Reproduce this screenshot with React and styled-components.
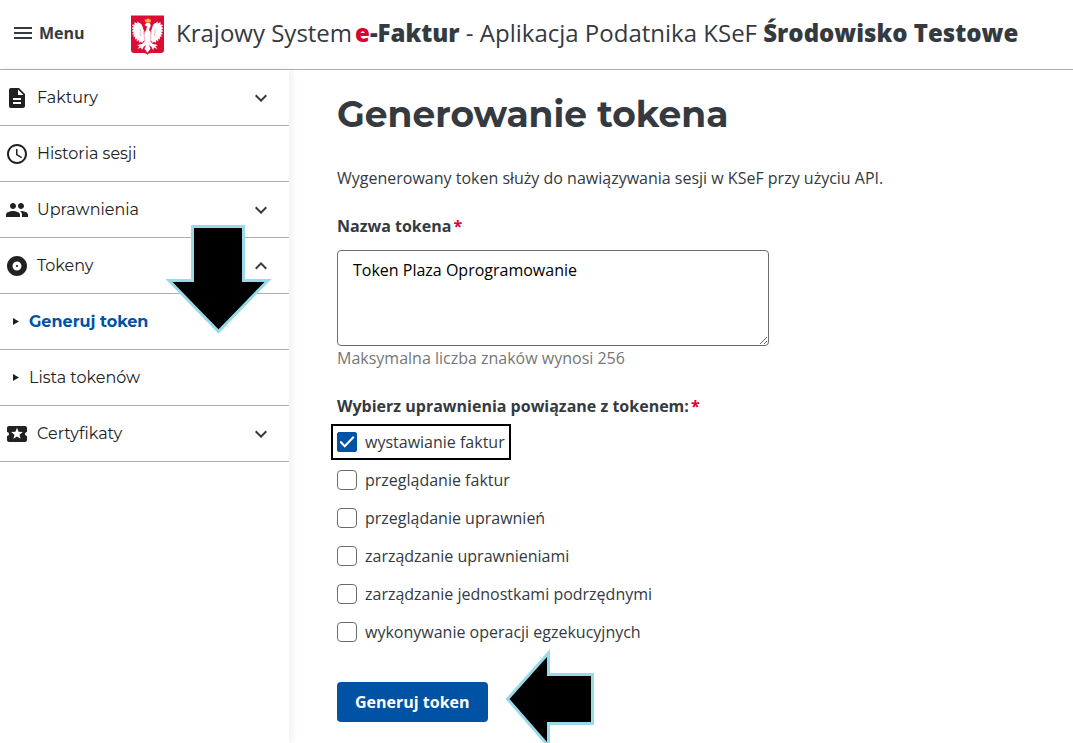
import React, { useState } from 'react';
import styled, { createGlobalStyle } from 'styled-components';
import {
  MdMenu,
  MdDescription,
  MdSchedule,
  MdPeople,
  MdAlbum,
  MdLocalActivity,
  MdExpandMore,
  MdExpandLess,
} from 'react-icons/md';

const GlobalStyle = createGlobalStyle`
  * {
    box-sizing: border-box;
  }

  body {
    margin: 0;
    background: #fff;
    color: #343a40;
    font-family: 'Open Sans', sans-serif;
    font-size: 16px;
    line-height: 24px;
  }
`;

const Page = styled.div`
  display: flex;
  flex-direction: column;
  height: 100vh;
  overflow: hidden;
`;

const Header = styled.header`
  display: flex;
  align-items: center;
  height: 70px;
  flex-shrink: 0;
  padding: 0 11px 4px;
  border-bottom: 1px solid #adb0b3;
`;

const MenuButton = styled.button`
  display: flex;
  align-items: center;
  gap: 4px;
  width: 120px;
  padding: 0;
  border: 0;
  background: none;
  color: #343a40;
  font: inherit;
  font-weight: 700;
  cursor: pointer;
`;

const Brand = styled.a`
  display: flex;
  align-items: center;
  gap: 12px;
  color: #343a40;
  font-size: 24px;
  line-height: 32px;
  white-space: nowrap;
  text-decoration: none;

  strong {
    font-weight: 800;
  }
`;

const Product = styled.strong`
  margin-left: 3px;

  em {
    color: #dc0032;
    font-style: normal;
  }
`;

const Emblem = styled.svg`
  width: 33px;
  height: 40px;
  margin-top: 4px;
`;

const Body = styled.div`
  display: flex;
  flex: 1;
`;

const Sidebar = styled.nav`
  flex: 0 0 289px;
  box-shadow: 2px 0 8px rgba(0, 0, 0, 0.08);
`;

const NavList = styled.ul`
  list-style: none;
  margin: 0;
  padding: 0;
`;

const NavEntry = styled.li`
  position: relative;
`;

const NavLink = styled.a`
  display: flex;
  align-items: center;
  gap: ${({ $nested }) => ($nested ? 10 : 8)}px;
  height: 56px;
  padding: 0 16px 0 ${({ $nested }) => ($nested ? 13 : 5)}px;
  border-bottom: 1px solid #adb0b3;
  color: ${({ $active }) => ($active ? '#0052a5' : '#212121')};
  font-family: Montserrat, Inter, sans-serif;
  font-size: 16px;
  font-weight: ${({ $active }) => ($active ? 700 : 400)};
  text-decoration: none;

  svg {
    flex-shrink: 0;
    color: #212121;
  }

  svg:last-child {
    color: #343a40;
  }
`;

const NavText = styled.span`
  flex: 1;
`;

const Main = styled.main`
  flex: 1;
  padding: 20px 48px;
`;

const Title = styled.h1`
  margin: 0 0 28px;
  font-family: Montserrat, Inter, sans-serif;
  font-size: 36px;
  font-weight: 700;
  line-height: 48px;
`;

const Lead = styled.p`
  margin: 0 0 24px;
`;

const FieldLabel = styled.label`
  display: block;
  margin-bottom: 12px;
  font-weight: 700;
`;

const Required = styled.span`
  margin-left: 2px;
  color: #dc0032;
`;

const TextArea = styled.textarea`
  display: block;
  width: 100%;
  max-width: 432px;
  height: 96px;
  padding: 7px 15px;
  border: 1px solid #6b6b6b;
  border-radius: 4px;
  color: #000;
  font: inherit;
  resize: both;
`;

const Hint = styled.p`
  margin: 0 0 24px;
  color: #767676;
`;

const Permissions = styled.fieldset`
  display: flex;
  flex-direction: column;
  align-items: flex-start;
  gap: 14px;
  margin: 0 0 38px;
  padding: 0;
  border: 0;
`;

const Legend = styled.legend`
  margin-bottom: 12px;
  padding: 0;
  font-weight: 700;
`;

const CheckLabel = styled.label`
  display: flex;
  align-items: center;
  gap: 8px;
  outline: ${({ $marked }) => ($marked ? '2px solid #000' : 'none')};
  outline-offset: 4px;
`;

const CheckBox = styled.input`
  appearance: none;
  display: grid;
  place-items: center;
  width: 20px;
  height: 20px;
  margin: 0;
  border: 1px solid #6b6b6b;
  border-radius: 4px;
  background: #fff;

  &:checked {
    border-color: #0052a5;
    border-radius: 2px;
    background: #0052a5;
  }

  &:checked::after {
    content: '';
    width: 15px;
    height: 12px;
    background: #fff;
    clip-path: polygon(0 52%, 10% 39%, 35% 72%, 90% 0, 100% 12%, 35% 98%);
  }
`;

const Actions = styled.div`
  position: relative;
  display: flex;
`;

const SubmitButton = styled.button`
  height: 40px;
  padding: 0 18px;
  border: 0;
  border-radius: 4px;
  background: #0052a5;
  color: #fff;
  font: inherit;
  font-weight: 700;
  cursor: pointer;
`;

const Pointer = styled.svg`
  position: absolute;
  top: ${({ $top }) => $top}px;
  left: ${({ $left }) => $left}px;
  fill: #000;
  stroke: #99d9ea;
  stroke-width: 3;
  pointer-events: none;
`;

const permissions = [
  'wystawianie faktur',
  'przeglądanie faktur',
  'przeglądanie uprawnień',
  'zarządzanie uprawnieniami',
  'zarządzanie jednostkami podrzędnymi',
  'wykonywanie operacji egzekucyjnych',
];

const NavItem = ({ icon: Icon, label, toggle: Toggle, children }) => (
  <NavEntry>
    <NavLink href="#">
      <Icon size={24} />
      <NavText>{label}</NavText>
      {Toggle && <Toggle size={24} />}
    </NavLink>
    {children}
  </NavEntry>
);

const SubItem = ({ label, active }) => (
  <li>
    <NavLink href="#" $nested $active={active}>
      <svg width="6" height="7" viewBox="0 0 6 7" aria-hidden="true">
        <path d="M0 0L6 3.500L0 7Z" fill="currentColor" />
      </svg>
      <NavText>{label}</NavText>
    </NavLink>
  </li>
);

const EagleWing = () => (
  <g>
    <path d="M13.500 17Q12 14 11.500 11.500Q10 8 6 6.500L6.500 8.500Q4 7 3 7.500L4 9.500Q1.500 9 1 10.500L3 12Q1 12 .8 13.500L2.800 14.500Q1 15 1 16.500L3 17Q1.300 18 1.500 19.500L3.500 19.500Q2 20.500 2.500 22L4.500 21.500Q3.500 23 4 24.500L6 23.500Q5.300 25 6 26.500L8 25Q7.600 26.500 8.500 28L10 26.500L11 28L13.500 25Z" />
    <path d="M14 26L11 29L6 30L8.500 31.200L6.500 34L10 32.500L11 35L12.500 32L15 30Z" />
  </g>
);

const PolishEmblem = () => (
  <Emblem viewBox="0 0 33 40" aria-hidden="true">
    <path d="M0 0.500H33V35Q33 38 30 38H20Q18 38 16.500 39.800Q15 38 13 38H3Q0 38 0 35Z" fill="#dc0d35" />
    <g fill="#fff">
      <EagleWing />
      <g transform="translate(33 0) scale(-1 1)">
        <EagleWing />
      </g>
      <path d="M13.500 10Q15 7.500 17.500 7.500Q20 8.500 19.500 11.500L18 14.500Q20 17 20 21Q20 26 18 30L19.500 34L18 35.500L16.500 38L15 35.500L13.500 34L15 30Q13 26 13 21Q13.500 17 15.500 14L16 11.500Z" />
    </g>
    <g stroke="#dc0d35" strokeWidth=".5" fill="none" opacity=".6">
      <path d="M12.500 16L13.500 24M20.500 16L19.500 24M9 14L9.500 21M24 14L23.500 21" />
    </g>
    <path d="M13.500 4.500L15.500 4.500L17 3L18.500 4.500L20 4.500L19.500 7.500H14.500Z" fill="#f5b03d" />
  </Emblem>
);

const App = () => {
  const [name, setName] = useState('Token Plaza Oprogramowanie');
  const [selected, setSelected] = useState([permissions[0]]);

  const toggle = (item) => {
    setSelected(
      selected.includes(item) ? selected.filter((p) => p !== item) : [...selected, item]
    );
  };

  return (
    <Page>
      <GlobalStyle />
      <Header>
        <MenuButton type="button">
          <MdMenu size={24} />
          Menu
        </MenuButton>
        <Brand href="#">
          <PolishEmblem />
          <span>
            Krajowy System
            <Product>
              <em>e</em>-Faktur
            </Product>{' '}
            - Aplikacja Podatnika KSeF <strong>Środowisko Testowe</strong>
          </span>
        </Brand>
      </Header>

      <Body>
        <Sidebar>
          <NavList>
            <NavItem icon={MdDescription} label="Faktury" toggle={MdExpandMore} />
            <NavItem icon={MdSchedule} label="Historia sesji" />
            <NavItem icon={MdPeople} label="Uprawnienia" toggle={MdExpandMore} />
            <NavItem icon={MdAlbum} label="Tokeny" toggle={MdExpandLess}>
              <NavList>
                <SubItem label="Generuj token" active />
                <SubItem label="Lista tokenów" />
              </NavList>
              <Pointer $top={-14} $left={164} width="108" height="112" viewBox="0 0 108 112">
                <path d="M28.500 2.500H79.500V56.500H104L54.500 107.500L5 56.500H28.500Z" />
              </Pointer>
            </NavItem>
            <NavItem icon={MdLocalActivity} label="Certyfikaty" toggle={MdExpandMore} />
          </NavList>
        </Sidebar>

        <Main>
          <Title>Generowanie tokena</Title>
          <Lead>Wygenerowany token służy do nawiązywania sesji w KSeF przy użyciu API.</Lead>

          <FieldLabel htmlFor="token-name">
            Nazwa tokena<Required>*</Required>
          </FieldLabel>
          <TextArea
            id="token-name"
            maxLength={256}
            spellCheck={false}
            value={name}
            onChange={(e) => setName(e.target.value)}
          />
          <Hint>Maksymalna liczba znaków wynosi 256</Hint>

          <Permissions>
            <Legend>
              Wybierz uprawnienia powiązane z tokenem:<Required>*</Required>
            </Legend>
            {permissions.map((item, i) => (
              <CheckLabel key={item} $marked={i === 0}>
                <CheckBox
                  type="checkbox"
                  checked={selected.includes(item)}
                  onChange={() => toggle(item)}
                />
                {item}
              </CheckLabel>
            ))}
          </Permissions>

          <Actions>
            <SubmitButton type="button">Generuj token</SubmitButton>
            <Pointer $top={-34} $left={166} width="94" height="104" viewBox="0 0 94 104">
              <path d="M4.500 51L45.500 5V26.500H89.500V75.500H45.500V98Z" />
            </Pointer>
          </Actions>
        </Main>
      </Body>
    </Page>
  );
};

export default App;
